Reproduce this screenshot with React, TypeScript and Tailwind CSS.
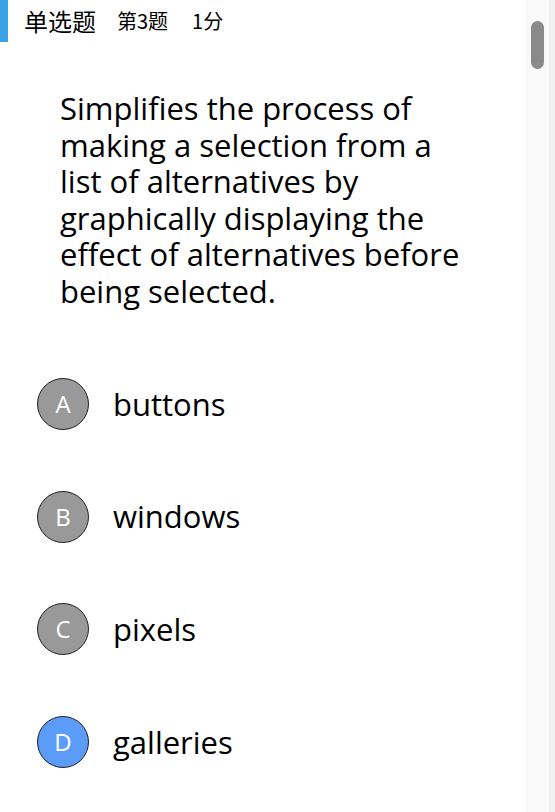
import React from "react";

const options = [
  { key: "A", text: "buttons", selected: false },
  { key: "B", text: "windows", selected: false },
  { key: "C", text: "pixels", selected: false },
  { key: "D", text: "galleries", selected: true },
];

export default function App() {
  return (
    <div
      className="flex h-[812px] w-[555px] overflow-hidden bg-white text-black"
      style={{ fontFamily: '"Open Sans", "Noto Sans CJK SC", sans-serif' }}
    >
      <div className="flex-1">
        <div className="flex h-[42px] items-center">
          <div className="h-[42px] w-[8px] bg-[#38a2e4]" />
          <span className="ml-[16px] text-[24px]" style={{ fontFamily: '"Noto Sans CJK SC", sans-serif' }}>单选题</span>
          <span className="ml-[21px] text-[20px]" style={{ fontFamily: '"Noto Sans CJK SC", sans-serif' }}>第3题</span>
          <span className="ml-[24px] text-[20px]" style={{ fontFamily: '"Noto Sans CJK SC", sans-serif' }}>1分</span>
        </div>
        <div className="pl-[60px] pt-[48px] text-[31px] leading-[36.6px]">
          Simplifies the process of
          <br />
          making a selection from a
          <br />
          list of alternatives by
          <br />
          graphically displaying the
          <br />
          effect of alternatives before
          <br />
          being selected.
        </div>
        <div className="mt-[38px] flex flex-col">
          {options.map((o) => (
            <div key={o.key} className="flex h-[112.7px] items-center">
              <div
                className={`ml-[37px] flex h-[52px] w-[52px] items-center justify-center rounded-full border border-[#222] text-[24px] text-white ${
                  o.selected ? "bg-[#5a9cf8]" : "bg-[#999999]"
                }`}
              >
                {o.key}
              </div>
              <span className="ml-[24px] text-[31px]">{o.text}</span>
            </div>
          ))}
        </div>
      </div>
      <div className="flex w-[29px] bg-[#f9f9f9]">
        <div className="w-[23px] pl-[5px] pt-[21px]">
          <div className="h-[48px] w-[13px] rounded-full bg-[#8a8a8a]" />
        </div>
        <div className="w-[6px] bg-[#f1f1f1]" />
      </div>
    </div>
  );
}
